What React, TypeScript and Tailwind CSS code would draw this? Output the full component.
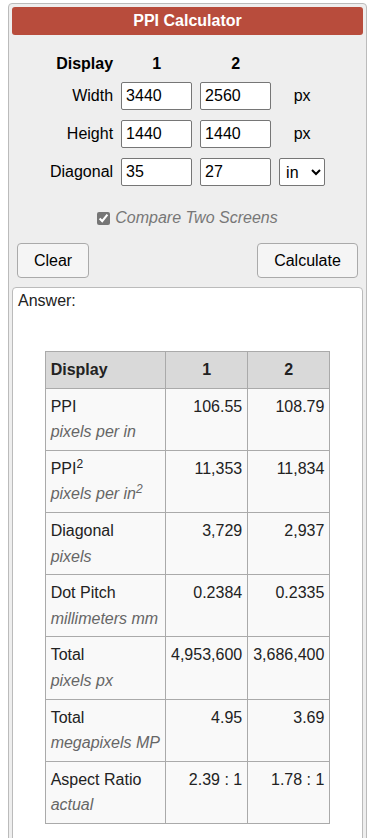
import React from "react";

const rows = [
  { label: "PPI", sub: "pixels per in", a: "106.55", b: "108.79" },
  { label: "PPI2", sub: "pixels per in2", a: "11,353", b: "11,834" },
  { label: "Diagonal", sub: "pixels", a: "3,729", b: "2,937" },
  { label: "Dot Pitch", sub: "millimeters mm", a: "0.2384", b: "0.2335" },
  { label: "Total", sub: "pixels px", a: "4,953,600", b: "3,686,400" },
  { label: "Total", sub: "megapixels MP", a: "4.95", b: "3.69" },
  { label: "Aspect Ratio", sub: "actual", a: "2.39 : 1", b: "1.78 : 1" },
];

function Label({ text }: { text: string }) {
  // PPI2 / in2 get a superscript 2
  if (text.endsWith("2")) {
    return (
      <>
        {text.slice(0, -1)}
        <sup className="text-[12px]">2</sup>
      </>
    );
  }
  return <>{text}</>;
}

function NumInput({ value }: { value: string }) {
  return (
    <input
      className="w-[71px] h-[28px] px-[4px] bg-white border border-[#767676] rounded-[2px] text-[16px] text-black outline-none"
      defaultValue={value}
    />
  );
}

export default function App() {
  return (
    <div className="bg-white min-h-screen pt-[3px] font-['Liberation_Sans',Arial,sans-serif] text-[16px] text-black">
      <div className="ml-[8px] w-[359px] bg-[#eeeeee] border border-[#bbbbbb] rounded-[4px] p-[3px]">
        <div className="h-[28px] bg-[#b84c3c] rounded-[3px] flex items-center justify-center text-white font-bold text-[16px]">
          PPI Calculator
        </div>

        <div className="flex justify-center mt-[21px]">
          <div className="grid grid-cols-[auto_71px_71px_46px] gap-x-[8px] gap-y-[10px] items-center">
            <div className="text-right font-bold h-[16px] leading-[16px]">Display</div>
            <div className="text-center font-bold leading-[16px]">1</div>
            <div className="text-center font-bold leading-[16px]">2</div>
            <div></div>

            <div className="text-right">Width</div>
            <NumInput value="3440" />
            <NumInput value="2560" />
            <div className="text-center">px</div>

            <div className="text-right">Height</div>
            <NumInput value="1440" />
            <NumInput value="1440" />
            <div className="text-center">px</div>

            <div className="text-right">Diagonal</div>
            <NumInput value="35" />
            <NumInput value="27" />
            <select
              className="w-[46px] h-[28px] bg-white border border-[#767676] rounded-[2px] text-[16px] text-black pl-[2px]"
              defaultValue="in"
            >
              <option value="in">in</option>
              <option value="cm">cm</option>
            </select>
          </div>
        </div>

        <div className="flex items-center justify-center gap-[5px] mt-[22px] h-[20px] text-[#777777] italic">
          <input
            type="checkbox"
            checked
            onChange={() => {}}
            className="w-[13px] h-[13px] m-0 accent-[#767676]"
          />
          <span>Compare Two Screens</span>
        </div>

        <div className="flex justify-between px-[5px] mt-[15px]">
          <button className="w-[72px] h-[35px] bg-[#f5f5f5] border border-[#aaaaaa] rounded-[4px] text-[16px]">
            Clear
          </button>
          <button className="w-[101px] h-[35px] bg-[#f5f5f5] border border-[#aaaaaa] rounded-[4px] text-[16px]">
            Calculate
          </button>
        </div>

        <div className="mt-[9px] bg-white border border-[#bbbbbb] rounded-[4px] px-[5px] pt-[3px] pb-[40px]">
          <div className="leading-[20px] text-[#222222]">Answer:</div>
          <div className="flex justify-center mt-[40px]">
            <table className="border-collapse text-[#222222] leading-[1.6]">
              <thead>
                <tr className="bg-[#d9d9d9]">
                  <th className="w-[120px] border border-[#aaaaaa] px-[5px] py-[5px] text-left">Display</th>
                  <th className="w-[82px] border border-[#aaaaaa] px-[5px] py-[5px] text-center">1</th>
                  <th className="w-[82px] border border-[#aaaaaa] px-[5px] py-[5px] text-center">2</th>
                </tr>
              </thead>
              <tbody>
                {rows.map((r, i) => (
                  <tr key={i} className="bg-[#f9f9f9]">
                    <td className="border border-[#aaaaaa] px-[5px] py-[5px] align-top whitespace-nowrap">
                      <div><Label text={r.label} /></div>
                      <div className="italic text-[#666666]"><Label text={r.sub} /></div>
                    </td>
                    <td className="border border-[#aaaaaa] px-[5px] py-[5px] align-top text-right whitespace-nowrap">{r.a}</td>
                    <td className="border border-[#aaaaaa] px-[5px] py-[5px] align-top text-right whitespace-nowrap">{r.b}</td>
                  </tr>
                ))}
              </tbody>
            </table>
          </div>
        </div>
      </div>
    </div>
  );
}
